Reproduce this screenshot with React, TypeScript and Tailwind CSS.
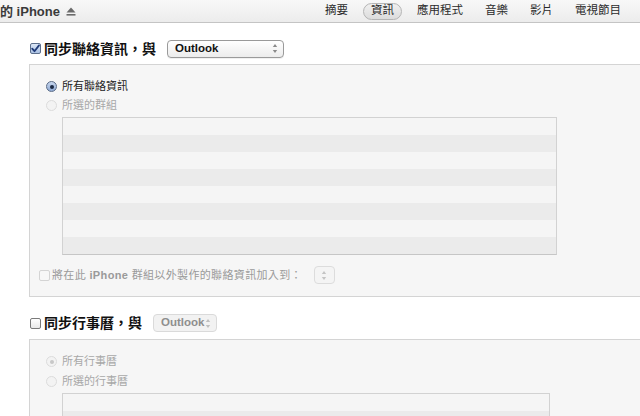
import React from 'react';

const font = 'font-["Liberation_Sans","Noto_Sans_CJK_TC",sans-serif]';

function CheckBox({ checked, disabled }: { checked?: boolean; disabled?: boolean }) {
  return (
    <span
      className={`relative inline-flex w-[11px] h-[11px] shrink-0 rounded-[2px] border ${
        disabled
          ? 'border-[#d4d4d4] bg-[#f7f7f7]'
          : checked
          ? 'border-[#5d6f8c] bg-gradient-to-b from-[#dce7f6] to-[#a9c0e2]'
          : 'border-[#7a7a7a] bg-gradient-to-b from-white to-[#e9e9e9]'
      }`}
    >
      {checked && (
        <svg viewBox="0 0 11 11" className="absolute -top-[1px] -left-[1px] w-[11px] h-[11px]">
          <path d="M2.2 5.6 L4.5 8.2 L9 2.4" fill="none" stroke="#1f3a78" strokeWidth="1.8" strokeLinecap="round" strokeLinejoin="round" />
        </svg>
      )}
    </span>
  );
}

function Radio({ checked, disabled }: { checked?: boolean; disabled?: boolean }) {
  return (
    <span
      className={`inline-flex items-center justify-center w-[11px] h-[11px] shrink-0 rounded-full border ${
        disabled
          ? 'border-[#dcdcdc] bg-[#f3f3f3]'
          : checked
          ? 'border-[#5a6b87] bg-gradient-to-b from-[#c9d8ef] to-[#8fa9d3]'
          : 'border-[#8a8a8a] bg-white'
      }`}
    >
      {checked && <span className={`w-[4px] h-[4px] rounded-full ${disabled ? 'bg-[#c8c8c8]' : 'bg-[#1c2a44]'}`} />}
    </span>
  );
}

function Arrows({ color }: { color: string }) {
  return (
    <svg viewBox="0 0 6 11" className="w-[6px] h-[11px] shrink-0">
      <path d="M3 1 L5.2 4 H0.8 Z" fill={color} />
      <path d="M3 10 L5.2 7 H0.8 Z" fill={color} />
    </svg>
  );
}

function Popup({ label, width, disabled }: { label: string; width: string; disabled?: boolean }) {
  return (
    <div
      className={`${width} h-[18px] flex items-center justify-between pl-[7px] pr-[5px] rounded-[4px] border ${
        disabled
          ? 'border-[#dadada] bg-[#f2f2f2] text-[#8e8e8e]'
          : 'border-[#9a9a9a] bg-gradient-to-b from-white to-[#ececec] text-[#111] shadow-[0_1px_0_rgba(0,0,0,0.06)]'
      }`}
    >
      <span className="text-[11.5px] font-bold leading-none">{label}</span>
      <Arrows color={disabled ? '#c0c0c0' : '#8a8a8a'} />
    </div>
  );
}

function StripedList({ width, rows }: { width: string; rows: number }) {
  return (
    <div className={`${width} border border-[#d2d2d2] border-b-[#c6c6c6]`}>
      {Array.from({ length: rows }).map((_, i) => (
        <div key={i} className={`h-[17px] ${i % 2 === 0 ? 'bg-[#f5f5f5]' : 'bg-[#ebebeb]'}`} />
      ))}
    </div>
  );
}

const tabs = ['摘要', '資訊', '應用程式', '音樂', '影片', '電視節目'];

export default function App() {
  return (
    <div className={`w-[640px] h-[416px] overflow-hidden bg-white ${font}`}>
      {/* Header */}
      <div className="h-[23px] flex items-center bg-gradient-to-b from-[#f8f8f8] to-[#ececec] border-b border-[#c4c4c4]">
        <div className="w-[318px] shrink-0 flex items-center gap-[6px] text-[13px] font-bold text-[#3a3a3a] leading-none">
          <span>的 iPhone</span>
          <svg viewBox="0 0 10 9" className="w-[10px] h-[9px]">
            <path d="M5 0.5 L9.5 5.5 H0.5 Z" fill="#6a6a6a" />
            <rect x="0.5" y="7" width="9" height="1.6" fill="#6a6a6a" />
          </svg>
        </div>
        <div className="flex items-center gap-[8px] text-[11.5px] text-[#2a2a2a] leading-none">
          {tabs.map((t, i) => (
            <span
              key={t}
              className={`h-[17px] flex items-center px-[7px] ${
                i === 1 ? 'rounded-full border border-[#b5b5b5] bg-gradient-to-b from-[#f0f0f0] to-[#dcdcdc]' : ''
              }`}
            >
              {t}
            </span>
          ))}
        </div>
      </div>

      {/* Contacts section */}
      <div className="h-[41px] flex items-center pl-[30px] pt-[10px]">
        <CheckBox checked />
        <span className="ml-[3px] text-[14px] font-bold text-[#111] leading-none">同步聯絡資訊，與</span>
        <div className="ml-[11px]">
          <Popup label="Outlook" width="w-[117px]" />
        </div>
      </div>
      <div className="ml-[29px] h-[233px] bg-[#f6f6f6] border-t border-l border-b border-[#d4d4d4] pt-[16px]">
        <div className="flex items-center h-[11px] pl-[16px]">
          <Radio checked />
          <span className="ml-[5px] text-[11px] text-[#222] leading-none">所有聯絡資訊</span>
        </div>
        <div className="flex items-center h-[11px] pl-[16px] mt-[8px]">
          <Radio disabled />
          <span className="ml-[5px] text-[11px] text-[#a8a8a8] leading-none">所選的群組</span>
        </div>
        <div className="pl-[32px] mt-[6px]">
          <StripedList width="w-[495px]" rows={8} />
        </div>
        <div className="flex items-center pl-[9px] mt-[11px] h-[18px]">
          <CheckBox disabled />
          <span className="ml-[2px] text-[11px] tracking-[0.35px] text-[#9a9a9a] leading-none">
            將在此 <span className="font-bold">iPhone</span> 群組以外製作的聯絡資訊加入到：
          </span>
          <div className="ml-[12px] w-[21px] h-[18px] rounded-[4px] border border-[#dcdcdc] bg-[#f4f4f4] flex items-center justify-center">
            <Arrows color="#c4c4c4" />
          </div>
        </div>
      </div>

      {/* Calendar section */}
      <div className="h-[42px] flex items-center pl-[30px] pt-[13px] pb-[3px]">
        <CheckBox />
        <span className="ml-[3px] text-[14px] font-bold text-[#111] leading-none">同步行事曆，與</span>
        <div className="ml-[11px]">
          <Popup label="Outlook" width="w-[64px]" disabled />
        </div>
      </div>
      <div className="ml-[29px] h-[120px] bg-[#f6f6f6] border-t border-l border-[#d4d4d4] pt-[16px]">
        <div className="flex items-center h-[11px] pl-[16px]">
          <Radio checked disabled />
          <span className="ml-[5px] text-[11px] text-[#a8a8a8] leading-none">所有行事曆</span>
        </div>
        <div className="flex items-center h-[11px] pl-[16px] mt-[9px]">
          <Radio disabled />
          <span className="ml-[5px] text-[11px] text-[#a8a8a8] leading-none">所選的行事曆</span>
        </div>
        <div className="pl-[32px] mt-[6px]">
          <StripedList width="w-[488px]" rows={4} />
        </div>
      </div>
    </div>
  );
}
